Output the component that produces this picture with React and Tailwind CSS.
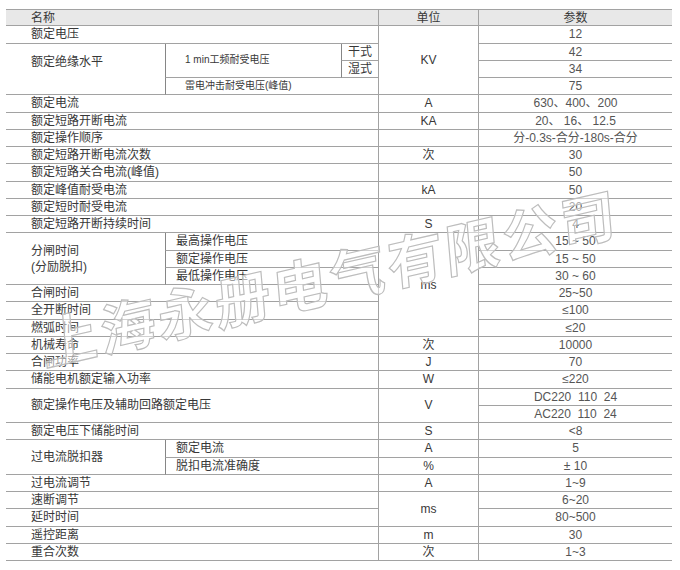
import React from 'react';

// cell borders: every cell draws its bottom line; unit column draws the two verticals
const line = 'border-b border-[#a2a2a2]';
const unit = 'border-x border-[#868686]';

function C({ className = '', children }) {
    return <div className={`flex items-center ${line} ${className}`}>{children}</div>;
}

export default function App() {
    return (
        <div className="relative w-[680px] h-[570px] overflow-hidden bg-white font-['Liberation_Sans','Noto_Sans_CJK_SC',sans-serif] text-[12px] leading-none text-[#383838]">
            <div className="ml-[6px] mt-[9px] grid w-[666px] grid-cols-[159px_176px_37px_101px_193px] grid-rows-[repeat(32,17.25px)]">
                {/* header */}
                <C className="col-span-3 border-t bg-[#e8e8e8] pl-[25px]">名称</C>
                <C className={`border-t bg-[#e8e8e8] justify-center ${unit}`}>单位</C>
                <C className="border-t bg-[#e8e8e8] justify-center">参数</C>

                {/* 额定电压 / 绝缘水平 */}
                <C className="col-start-1 col-span-3 row-start-2 pl-[25px]">额定电压</C>
                <C className={`col-start-4 row-start-2 row-span-4 justify-center ${unit}`}>KV</C>
                <C className="col-start-5 row-start-2 justify-center text-[#555]">12</C>

                <C className="col-start-1 row-start-3 row-span-3 pl-[25px] pb-[14px]">额定绝缘水平</C>
                <C className="col-start-2 row-start-3 row-span-2 border-l border-l-[#868686] pl-[19px] text-[10px]">1 min工频耐受电压</C>
                <C className="col-start-3 row-start-3 border-l border-l-[#868686] pl-[6px]">干式</C>
                <C className="col-start-3 row-start-4 border-l border-l-[#868686] pl-[6px]">湿式</C>
                <C className="col-start-2 col-span-2 row-start-5 border-l border-l-[#868686] pl-[19px] text-[10px]">雷电冲击耐受电压(峰值)</C>
                <C className="col-start-5 row-start-3 justify-center text-[#555]">42</C>
                <C className="col-start-5 row-start-4 justify-center text-[#555]">34</C>
                <C className="col-start-5 row-start-5 justify-center text-[#555]">75</C>

                {/* single rows */}
                <C className="col-start-1 col-span-3 row-start-6 pl-[25px]">额定电流</C>
                <C className={`col-start-4 row-start-6 justify-center ${unit}`}>A</C>
                <C className="col-start-5 row-start-6 justify-center text-[#555]">630、400、200</C>

                <C className="col-start-1 col-span-3 row-start-7 pl-[25px]">额定短路开断电流</C>
                <C className={`col-start-4 row-start-7 justify-center ${unit}`}>KA</C>
                <C className="col-start-5 row-start-7 justify-center text-[#555] whitespace-pre">20、 16、 12.5</C>

                <C className="col-start-1 col-span-3 row-start-8 pl-[25px]">额定操作顺序</C>
                <C className={`col-start-4 row-start-8 ${unit}`}></C>
                <C className="col-start-5 row-start-8 justify-center text-[#555]">分-0.3s-合分-180s-合分</C>

                <C className="col-start-1 col-span-3 row-start-9 pl-[25px]">额定短路开断电流次数</C>
                <C className={`col-start-4 row-start-9 justify-center ${unit}`}>次</C>
                <C className="col-start-5 row-start-9 justify-center text-[#555]">30</C>

                <C className="col-start-1 col-span-3 row-start-10 pl-[25px]">额定短路关合电流(峰值)</C>
                <C className={`col-start-4 row-start-10 ${unit}`}></C>
                <C className="col-start-5 row-start-10 justify-center text-[#555]">50</C>

                <C className="col-start-1 col-span-3 row-start-11 pl-[25px]">额定峰值耐受电流</C>
                <C className={`col-start-4 row-start-11 justify-center ${unit}`}>kA</C>
                <C className="col-start-5 row-start-11 justify-center text-[#555]">50</C>

                <C className="col-start-1 col-span-3 row-start-12 pl-[25px]">额定短时耐受电流</C>
                <C className={`col-start-4 row-start-12 ${unit}`}></C>
                <C className="col-start-5 row-start-12 justify-center text-[#555]">20</C>

                <C className="col-start-1 col-span-3 row-start-13 pl-[25px]">额定短路开断持续时间</C>
                <C className={`col-start-4 row-start-13 justify-center ${unit}`}>S</C>
                <C className="col-start-5 row-start-13 justify-center text-[#555]">4</C>

                {/* 分闸时间 block, ms spans 6 rows */}
                <C className="col-start-1 row-start-14 row-span-3 pl-[25px] leading-[16px]">
                    <div>
                        <div>分闸时间</div>
                        <div>(分励脱扣)</div>
                    </div>
                </C>
                <C className="col-start-2 col-span-2 row-start-14 border-l border-l-[#868686] pl-[10px]">最高操作电压</C>
                <C className="col-start-2 col-span-2 row-start-15 border-l border-l-[#868686] pl-[10px]">额定操作电压</C>
                <C className="col-start-2 col-span-2 row-start-16 border-l border-l-[#868686] pl-[10px]">最低操作电压</C>
                <C className={`col-start-4 row-start-14 row-span-6 justify-center ${unit}`}>ms</C>
                <C className="col-start-5 row-start-14 justify-center text-[#555]">15 ~ 50</C>
                <C className="col-start-5 row-start-15 justify-center text-[#555]">15 ~ 50</C>
                <C className="col-start-5 row-start-16 justify-center text-[#555]">30 ~ 60</C>

                <C className="col-start-1 col-span-3 row-start-17 pl-[25px]">合闸时间</C>
                <C className="col-start-5 row-start-17 justify-center text-[#555]">25~50</C>
                <C className="col-start-1 col-span-3 row-start-18 pl-[25px]">全开断时间</C>
                <C className="col-start-5 row-start-18 justify-center text-[#555]">≤100</C>
                <C className="col-start-1 col-span-3 row-start-19 pl-[25px]">燃弧时间</C>
                <C className="col-start-5 row-start-19 justify-center text-[#555]">≤20</C>

                <C className="col-start-1 col-span-3 row-start-20 pl-[25px]">机械寿命</C>
                <C className={`col-start-4 row-start-20 justify-center ${unit}`}>次</C>
                <C className="col-start-5 row-start-20 justify-center text-[#555]">10000</C>

                <C className="col-start-1 col-span-3 row-start-21 pl-[25px]">合闸功率</C>
                <C className={`col-start-4 row-start-21 justify-center ${unit}`}>J</C>
                <C className="col-start-5 row-start-21 justify-center text-[#555]">70</C>

                <C className="col-start-1 col-span-3 row-start-22 pl-[25px]">储能电机额定输入功率</C>
                <C className={`col-start-4 row-start-22 justify-center ${unit}`}>W</C>
                <C className="col-start-5 row-start-22 justify-center text-[#555]">≤220</C>

                <C className="col-start-1 col-span-3 row-start-23 row-span-2 pl-[25px]">额定操作电压及辅助回路额定电压</C>
                <C className={`col-start-4 row-start-23 row-span-2 justify-center ${unit}`}>V</C>
                <C className="col-start-5 row-start-23 justify-center text-[#555] whitespace-pre">DC220  110  24</C>
                <C className="col-start-5 row-start-24 justify-center text-[#555] whitespace-pre">AC220  110  24</C>

                <C className="col-start-1 col-span-3 row-start-25 pl-[25px]">额定电压下储能时间</C>
                <C className={`col-start-4 row-start-25 justify-center ${unit}`}>S</C>
                <C className="col-start-5 row-start-25 justify-center text-[#555]">&lt;8</C>

                {/* 过电流脱扣器 */}
                <C className="col-start-1 row-start-26 row-span-2 pl-[25px]">过电流脱扣器</C>
                <C className="col-start-2 col-span-2 row-start-26 border-l border-l-[#868686] pl-[10px]">额定电流</C>
                <C className="col-start-2 col-span-2 row-start-27 border-l border-l-[#868686] pl-[10px]">脱扣电流准确度</C>
                <C className={`col-start-4 row-start-26 justify-center ${unit}`}>A</C>
                <C className={`col-start-4 row-start-27 justify-center ${unit}`}>%</C>
                <C className="col-start-5 row-start-26 justify-center text-[#555]">5</C>
                <C className="col-start-5 row-start-27 justify-center text-[#555]">± 10</C>

                <C className="col-start-1 col-span-3 row-start-28 pl-[25px]">过电流调节</C>
                <C className={`col-start-4 row-start-28 justify-center ${unit}`}>A</C>
                <C className="col-start-5 row-start-28 justify-center text-[#555]">1~9</C>

                <C className="col-start-1 col-span-3 row-start-29 pl-[25px]">速断调节</C>
                <C className={`col-start-4 row-start-29 row-span-2 justify-center ${unit}`}>ms</C>
                <C className="col-start-5 row-start-29 justify-center text-[#555]">6~20</C>
                <C className="col-start-1 col-span-3 row-start-30 pl-[25px]">延时时间</C>
                <C className="col-start-5 row-start-30 justify-center text-[#555]">80~500</C>

                <C className="col-start-1 col-span-3 row-start-31 pl-[25px]">遥控距离</C>
                <C className={`col-start-4 row-start-31 justify-center ${unit}`}>m</C>
                <C className="col-start-5 row-start-31 justify-center text-[#555]">30</C>

                <C className="col-start-1 col-span-3 row-start-32 pl-[25px]">重合次数</C>
                <C className={`col-start-4 row-start-32 justify-center ${unit}`}>次</C>
                <C className="col-start-5 row-start-32 justify-center text-[#555]">1~3</C>
            </div>

            {/* watermark */}
            <div className="pointer-events-none absolute left-[330px] top-[276px] -translate-x-1/2 -translate-y-1/2 -rotate-[13deg] -skew-x-[8deg] whitespace-nowrap font-['Noto_Sans_CJK_SC',sans-serif] font-bold text-[56px] leading-none tracking-[3px] text-white/50 [-webkit-text-stroke:1.2px_#bdbdbd]">
                上海永册电气有限公司
            </div>
        </div>
    );
}
